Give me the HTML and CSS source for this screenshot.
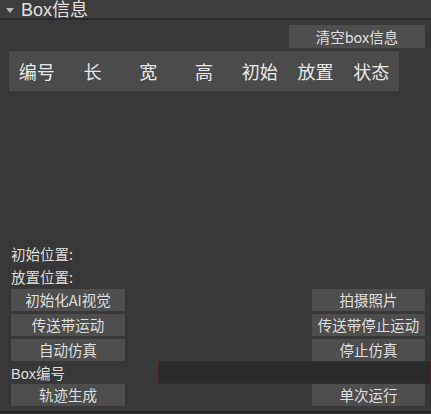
FILE: index.html
```html
<!DOCTYPE html>
<html lang="zh">
<head>
<meta charset="utf-8">
<link rel="stylesheet" href="styles.css">
</head>
<body>
<div class="panel">
  <div class="header">
    <span class="caret"></span>
    <span class="title">Box信息</span>
  </div>
  <div class="toolbar">
    <div class="btn btn-clear">清空box信息</div>
  </div>
  <div class="table-head">
    <span>编号</span><span>长</span><span>宽</span><span>高</span><span>初始</span><span>放置</span><span>状态</span>
  </div>
  <div class="table-body"></div>
  <div class="label-row">初始位置:</div>
  <div class="label-row">放置位置:</div>
  <div class="btn-row">
    <div class="btn">初始化AI视觉</div>
    <div class="btn btn-right">拍摄照片</div>
  </div>
  <div class="btn-row">
    <div class="btn">传送带运动</div>
    <div class="btn btn-right">传送带停止运动</div>
  </div>
  <div class="btn-row">
    <div class="btn">自动仿真</div>
    <div class="btn btn-right">停止仿真</div>
  </div>
  <div class="input-row">
    <span class="input-label">Box编号</span>
    <div class="input"></div>
  </div>
  <div class="btn-row last">
    <div class="btn">轨迹生成</div>
    <div class="btn btn-right">单次运行</div>
  </div>
  <div class="footer-line"></div>
</div>
</body>
</html>
```
FILE: styles.css
```css
html, body {
  margin: 0;
  padding: 0;
  background: #383838;
}
body {
  width: 431px;
  height: 414px;
  overflow: hidden;
  font-family: "Noto Sans CJK SC", "Liberation Sans", sans-serif;
  color: #dcdcdc;
}
.panel {
  display: flex;
  flex-direction: column;
  height: 414px;
}
.header {
  height: 18px;
  background: #3d3d3d;
  border-bottom: 2px solid #2a2a2a;
  display: flex;
  align-items: center;
  box-sizing: content-box;
}
.caret {
  width: 0;
  height: 0;
  margin-left: 6px;
  margin-top: 2px;
  border-left: 4.5px solid transparent;
  border-right: 4.5px solid transparent;
  border-top: 5px solid #b8b8b8;
}
.title {
  margin-left: 7px;
  font-family: "Liberation Sans", "Noto Sans CJK SC", sans-serif;
  font-size: 18px;
  line-height: 18px;
  color: #e0e0e0;
  margin-top: 1px;
}
.toolbar {
  display: flex;
  justify-content: flex-end;
  padding-right: 6px;
  margin-top: 5px;
}
.btn {
  background: #4e4e4e;
  color: #dedede;
  font-size: 14.5px;
  height: 22px;
  line-height: 22px;
  text-align: center;
  width: 114px;
}
.btn-clear {
  width: 136px;
  height: 23px;
  line-height: 23px;
}
.table-head {
  margin-top: 3px;
  margin-left: 9px;
  width: 390px;
  height: 40px;
  background: #4b4b4b;
  display: grid;
  grid-template-columns: repeat(7, 1fr);
  align-items: center;
  font-size: 18px;
  color: #e8e8e8;
}
.table-head span {
  text-align: center;
}
.table-body {
  height: 151px;
}
.label-row {
  height: 23px;
  line-height: 23px;
  padding-left: 11px;
  font-size: 14.5px;
}
.btn-row {
  display: flex;
  justify-content: space-between;
  padding: 0 6px 0 11px;
  margin-top: 1px;
  margin-bottom: 2px;
}
.btn-row .btn-right {
  width: 113px;
}
.input-row {
  display: flex;
  align-items: center;
  height: 23px;
  margin-top: -2px;
}
.input-label {
  width: 147px;
  padding-left: 11px;
  font-size: 14.5px;
  font-family: "Liberation Sans", "Noto Sans CJK SC", sans-serif;
}
.input {
  flex: 1;
  height: 23px;
  background: #2a2a2a;
  border: 1px solid #4a2323;
  box-sizing: border-box;
  margin-right: 0;
}
.btn-row.last {
  margin-top: 0;
  margin-bottom: 0;
}
.footer-line {
  margin-top: 5px;
  height: 2px;
  background: #262626;
}
```
